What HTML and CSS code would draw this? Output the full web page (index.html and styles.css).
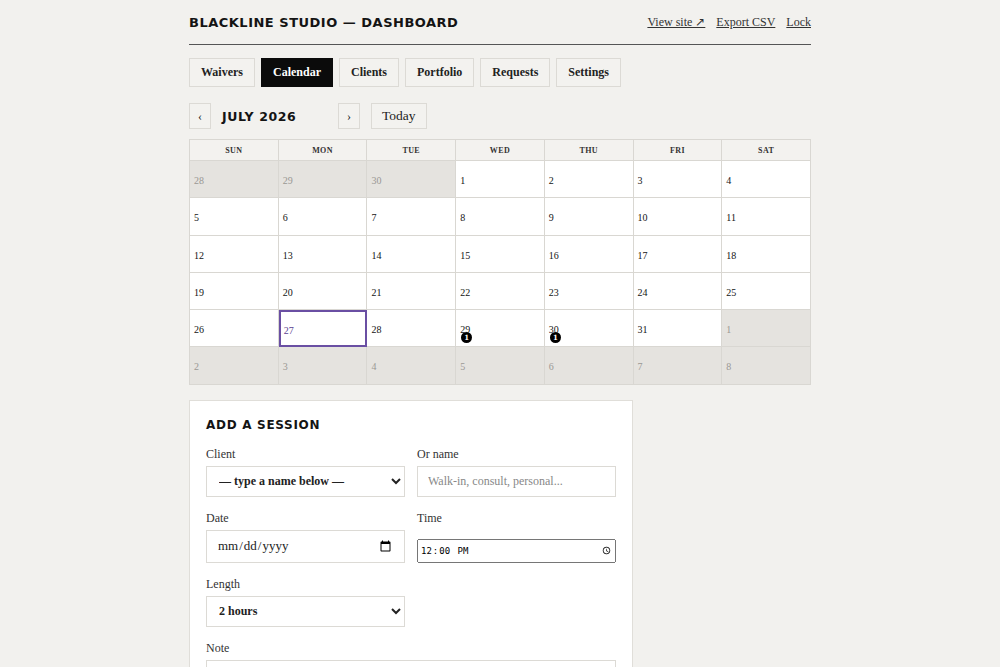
FILE: index.html
```html
<!DOCTYPE html>
<html lang="en">
<head>
	<meta charset="UTF-8">
	<title>Blackline Studio — Dashboard</title>
	<link rel="stylesheet" href="styles.css">
</head>
<body>
	<div class="wrap">
		<!-- header -->
		<header class="top">
			<h1 class="brand">Blackline Studio — Dashboard</h1>
			<nav class="top-links">
				<a href="#">View site ↗</a>
				<a href="#">Export CSV</a>
				<a href="#">Lock</a>
			</nav>
		</header>

		<!-- tabs -->
		<div class="tabs">
			<button type="button" class="tab">Waivers</button>
			<button type="button" class="tab active">Calendar</button>
			<button type="button" class="tab">Clients</button>
			<button type="button" class="tab">Portfolio</button>
			<button type="button" class="tab">Requests</button>
			<button type="button" class="tab">Settings</button>
		</div>

		<!-- month nav -->
		<div class="month-nav">
			<button type="button" class="nav-btn">‹</button>
			<div class="month-label">July 2026</div>
			<button type="button" class="nav-btn">›</button>
			<button type="button" class="today-btn">Today</button>
		</div>

		<!-- calendar -->
		<div class="cal">
			<div class="cal-head">Sun</div>
			<div class="cal-head">Mon</div>
			<div class="cal-head">Tue</div>
			<div class="cal-head">Wed</div>
			<div class="cal-head">Thu</div>
			<div class="cal-head">Fri</div>
			<div class="cal-head">Sat</div>

			<div class="day out"><span class="num">28</span></div>
			<div class="day out"><span class="num">29</span></div>
			<div class="day out"><span class="num">30</span></div>
			<div class="day"><span class="num">1</span></div>
			<div class="day"><span class="num">2</span></div>
			<div class="day"><span class="num">3</span></div>
			<div class="day"><span class="num">4</span></div>

			<div class="day"><span class="num">5</span></div>
			<div class="day"><span class="num">6</span></div>
			<div class="day"><span class="num">7</span></div>
			<div class="day"><span class="num">8</span></div>
			<div class="day"><span class="num">9</span></div>
			<div class="day"><span class="num">10</span></div>
			<div class="day"><span class="num">11</span></div>

			<div class="day"><span class="num">12</span></div>
			<div class="day"><span class="num">13</span></div>
			<div class="day"><span class="num">14</span></div>
			<div class="day"><span class="num">15</span></div>
			<div class="day"><span class="num">16</span></div>
			<div class="day"><span class="num">17</span></div>
			<div class="day"><span class="num">18</span></div>

			<div class="day"><span class="num">19</span></div>
			<div class="day"><span class="num">20</span></div>
			<div class="day"><span class="num">21</span></div>
			<div class="day"><span class="num">22</span></div>
			<div class="day"><span class="num">23</span></div>
			<div class="day"><span class="num">24</span></div>
			<div class="day"><span class="num">25</span></div>

			<div class="day"><span class="num">26</span></div>
			<div class="day today"><span class="num">27</span></div>
			<div class="day"><span class="num">28</span></div>
			<div class="day"><span class="num">29</span><span class="badge">1</span></div>
			<div class="day"><span class="num">30</span><span class="badge">1</span></div>
			<div class="day"><span class="num">31</span></div>
			<div class="day out"><span class="num">1</span></div>

			<div class="day out"><span class="num">2</span></div>
			<div class="day out"><span class="num">3</span></div>
			<div class="day out"><span class="num">4</span></div>
			<div class="day out"><span class="num">5</span></div>
			<div class="day out"><span class="num">6</span></div>
			<div class="day out"><span class="num">7</span></div>
			<div class="day out"><span class="num">8</span></div>
		</div>

		<!-- add session -->
		<form class="card">
			<h2 class="card-title">Add a session</h2>
			<div class="form-grid">
				<label class="field">
					<span class="field-label">Client</span>
					<select class="input">
						<option>— type a name below —</option>
					</select>
				</label>
				<label class="field">
					<span class="field-label">Or name</span>
					<input class="input" type="text" placeholder="Walk-in, consult, personal...">
				</label>
				<label class="field">
					<span class="field-label">Date</span>
					<input class="input" type="date">
				</label>
				<label class="field">
					<span class="field-label">Time</span>
					<input class="time-input" type="time" value="12:00">
				</label>
				<label class="field">
					<span class="field-label">Length</span>
					<select class="input">
						<option>2 hours</option>
					</select>
				</label>
				<div></div>
				<label class="field wide">
					<span class="field-label">Note</span>
					<input class="input" type="text">
				</label>
			</div>
		</form>
	</div>
</body>
</html>
```

FILE: styles.css
```css
* {
	box-sizing: border-box;
}

body {
	margin: 0;
	background-color: #f2f1ee;
	color: #141414;
	font-family: "Liberation Serif", serif;
}

.wrap {
	width: 622px;
	margin: 0 auto;
	padding-top: 15px;
}

/* header */
.top {
	display: flex;
	justify-content: space-between;
	align-items: center;
	padding-bottom: 14px;
	border-bottom: 1.5px solid #555;
}

.brand {
	margin: 0;
	font-family: "DejaVu Sans", sans-serif;
	font-size: 13px;
	font-weight: bold;
	letter-spacing: 0.5px;
	text-transform: uppercase;
}

.top-links {
	display: flex;
	gap: 11px;
	font-size: 12px;
}

.top-links a {
	color: #333;
}

/* tabs */
.tabs {
	display: flex;
	gap: 6px;
	margin-top: 13px;
}

.tab {
	height: 29px;
	padding: 0 11px;
	border: 1px solid #dcdad5;
	background-color: #f3f2ef;
	color: #222;
	font-family: inherit;
	font-size: 12px;
	font-weight: bold;
}

.tab.active {
	background-color: #0b0b0b;
	border-color: #0b0b0b;
	color: #fff;
}

/* month nav */
.month-nav {
	display: flex;
	align-items: center;
	margin-top: 16px;
}

.nav-btn {
	width: 22px;
	height: 26px;
	padding: 0;
	border: 1px solid #dcdad5;
	background-color: #f3f2ef;
	font-family: inherit;
	font-size: 12px;
	color: #222;
}

.month-label {
	width: 127px;
	padding-left: 11px;
	font-family: "DejaVu Sans", sans-serif;
	font-size: 12.5px;
	font-weight: bold;
	letter-spacing: 0.6px;
	text-transform: uppercase;
}

.today-btn {
	height: 26px;
	margin-left: 11px;
	padding: 0 10px;
	border: 1px solid #dcdad5;
	background-color: #f3f2ef;
	font-family: inherit;
	font-size: 13.5px;
	color: #222;
}

/* calendar */
.cal {
	display: grid;
	grid-template-columns: repeat(7, 1fr);
	margin-top: 10px;
	border-top: 1px solid #d9d7d2;
	border-left: 1px solid #d9d7d2;
}

.cal-head {
	height: 21px;
	display: flex;
	align-items: center;
	justify-content: center;
	border-right: 1px solid #d9d7d2;
	border-bottom: 1px solid #d9d7d2;
	background-color: #f3f2ef;
	font-size: 8px;
	font-weight: bold;
	letter-spacing: 0.4px;
	text-transform: uppercase;
	color: #333;
}

.day {
	height: 37.3px;
	padding: 15px 4px 0;
	border-right: 1px solid #d9d7d2;
	border-bottom: 1px solid #d9d7d2;
	background-color: #fff;
	font-size: 10px;
	line-height: 10px;
}

.day .num {
	display: block;
}

.day.out {
	background-color: #e5e3df;
	color: #9a9894;
}

.day.today {
	border: 2px solid #6a4fa3;
	padding: 14px 3px 0;
	color: #5b3f93;
}

.badge {
	display: flex;
	align-items: center;
	justify-content: center;
	width: 11px;
	height: 11px;
	margin: -3px 0 0 1px;
	border-radius: 50%;
	background-color: #000;
	color: #fff;
	font-family: "DejaVu Serif", serif;
	font-size: 7px;
	font-weight: bold;
}

/* add session card */
.card {
	width: 444px;
	margin-top: 15px;
	padding: 17px 16px 16px;
	border: 1px solid #e0ded9;
	background-color: #fff;
}

.card-title {
	margin: 0 0 15px;
	font-family: "DejaVu Sans", sans-serif;
	font-size: 12px;
	line-height: 14px;
	font-weight: bold;
	letter-spacing: 0.7px;
	text-transform: uppercase;
}

.form-grid {
	display: grid;
	grid-template-columns: 1fr 1fr;
	column-gap: 12px;
	row-gap: 14px;
}

.field {
	display: flex;
	flex-direction: column;
}

.field.wide {
	grid-column: span 2;
}

.field-label {
	margin-bottom: 5px;
	font-size: 12px;
	line-height: 14px;
	color: #333;
}

.input {
	width: 100%;
	height: 31px;
	padding: 0 10px;
	border: 1px solid #dcdad5;
	background-color: #fff;
	font-family: inherit;
	font-size: 12px;
	color: #222;
}

.input::placeholder {
	color: #888;
}

select.input {
	padding: 0 8px;
	font-weight: bold;
}

input[type="date"].input {
	height: 33px;
	font-size: 13px;
}

.time-input {
	width: 100%;
	margin-top: auto;
	height: 24px;
	font-family: "DejaVu Sans Mono", monospace;
	font-size: 9px;
}
```
